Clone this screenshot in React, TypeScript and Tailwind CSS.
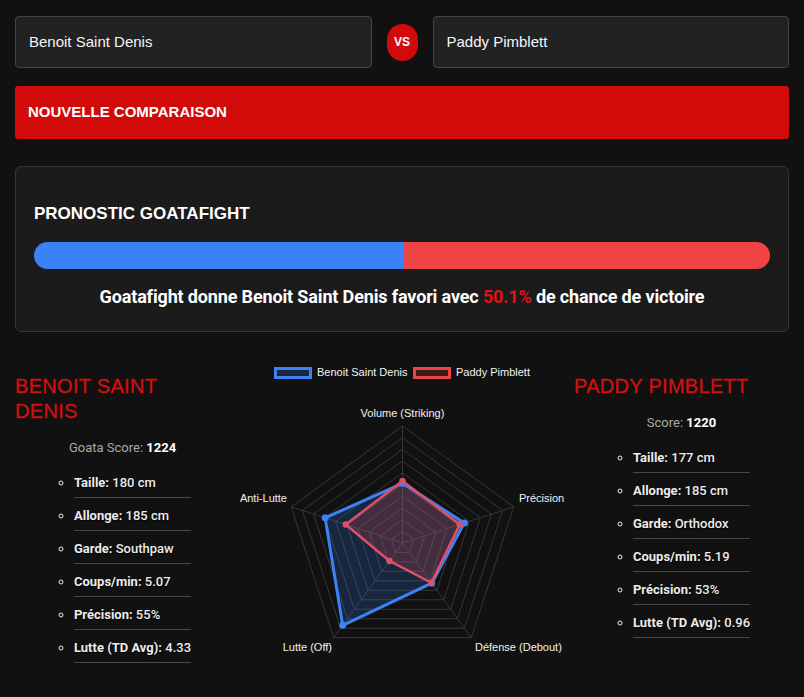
const fighters = [
  {
    name: 'Benoit Saint Denis',
    scoreLabel: 'Goata Score:',
    score: '1224',
    stats: [
      ['Taille:', '180 cm'],
      ['Allonge:', '185 cm'],
      ['Garde:', 'Southpaw'],
      ['Coups/min:', '5.07'],
      ['Précision:', '55%'],
      ['Lutte (TD Avg):', '4.33'],
    ],
  },
  {
    name: 'Paddy Pimblett',
    scoreLabel: 'Score:',
    score: '1220',
    stats: [
      ['Taille:', '177 cm'],
      ['Allonge:', '185 cm'],
      ['Garde:', 'Orthodox'],
      ['Coups/min:', '5.19'],
      ['Précision:', '53%'],
      ['Lutte (TD Avg):', '0.96'],
    ],
  },
];

const CX = 172.5;
const CY = 183;
const R = 117;

function pt(i: number, f: number) {
  const a = ((-90 + 72 * i) * Math.PI) / 180;
  return [CX + R * f * Math.cos(a), CY + R * f * Math.sin(a)];
}

function poly(vals: number[]) {
  return vals.map((v, i) => pt(i, v).join(',')).join(' ');
}

const blue = [0.51, 0.556, 0.425, 0.87, 0.695];
const red = [0.53, 0.515, 0.42, 0.19, 0.51];

function Radar() {
  const rings = [0.1, 0.2, 0.3, 0.4, 0.5, 0.6, 0.7, 0.8, 0.9, 1];
  return (
    <svg viewBox="0 0 344 300" className="w-[344px] h-[300px] mx-auto" style={{ fontFamily: '"Liberation Sans", Arial, sans-serif' }}>
      {/* legend */}
      <rect x="45.5" y="8.5" width="35" height="9" fill="rgba(59,130,246,0.2)" stroke="#3b82f6" strokeWidth="3" />
      <text x="87" y="16" fontSize="11" fill="#f2f2f2">Benoit Saint Denis</text>
      <rect x="184.5" y="8.5" width="35" height="9" fill="rgba(239,68,68,0.2)" stroke="#ef4444" strokeWidth="3" />
      <text x="226" y="16" fontSize="11" fill="#f2f2f2">Paddy Pimblett</text>

      {/* grid */}
      {rings.map((r) => (
        <polygon key={r} points={poly([r, r, r, r, r])} fill="none" stroke="#363636" strokeWidth="1" />
      ))}
      {[0, 1, 2, 3, 4].map((i) => {
        const [x, y] = pt(i, 1);
        return <line key={i} x1={CX} y1={CY} x2={x} y2={y} stroke="#363636" strokeWidth="1" />;
      })}

      {/* data */}
      <polygon points={poly(blue)} fill="rgba(59,130,246,0.2)" stroke="#3b82f6" strokeWidth="3" strokeLinejoin="round" />
      <polygon points={poly(red)} fill="rgba(239,68,68,0.2)" stroke="#dc5068" strokeWidth="2.5" strokeLinejoin="round" />
      {blue.map((v, i) => {
        const [x, y] = pt(i, v);
        return <circle key={'b' + i} cx={x} cy={y} r="3.5" fill="#3b82f6" />;
      })}
      {red.map((v, i) => {
        const [x, y] = pt(i, v);
        return <circle key={'r' + i} cx={x} cy={y} r="3.2" fill="#dc5068" />;
      })}

      {/* labels */}
      <text x={CX} y="57" fontSize="11" fill="#f2f2f2" textAnchor="middle">Volume (Striking)</text>
      <text x="289" y="142" fontSize="11" fill="#f2f2f2">Précision</text>
      <text x="57" y="142" fontSize="11" fill="#f2f2f2" textAnchor="end">Anti-Lutte</text>
      <text x="245" y="291" fontSize="11" fill="#f2f2f2">Défense (Debout)</text>
      <text x="102" y="291" fontSize="11" fill="#f2f2f2" textAnchor="end">Lutte (Off)</text>
    </svg>
  );
}

function FighterColumn({ f }: { f: (typeof fighters)[number] }) {
  return (
    <div className="pt-[14px] flex flex-col">
      <h2 className="pr-[10px] font-['Liberation_Sans',Arial,sans-serif] text-[20px] leading-[25px] tracking-[0.3px] text-[#d40f0f] uppercase [-webkit-text-stroke:0.3px_#d40f0f]">
        {f.name}
      </h2>
      <p className="mt-[14px] text-center text-[13px] leading-5 text-[#a8a8a8]">
        {f.scoreLabel} <span className="font-bold text-white">{f.score}</span>
      </p>
      <ul className="mt-[7px] mx-auto w-fit list-[circle] pl-5 text-[13px] text-[#ececec] [text-shadow:1px_1px_1px_rgba(0,0,0,0.9)]">
        {f.stats.map(([k, v]) => (
          <li key={k} className="pt-[10px] pb-[6px] leading-4 border-b border-[#474747]">
            <span className="font-bold">{k}</span> <span className="font-medium">{v}</span>
          </li>
        ))}
      </ul>
    </div>
  );
}

export default function App() {
  return (
    <div className="min-h-screen bg-[#111111] px-[15px] pt-4 pb-10 font-['Roboto',sans-serif] text-white">
      <div className="flex items-center gap-[15px]">
        <div className="flex-1 h-[52px] flex items-center px-[13px] bg-[#222222] border border-[#444] rounded-[4px] font-['Liberation_Sans',Arial,sans-serif] text-[15px] text-[#f5f5f5]">
          Benoit Saint Denis
        </div>
        <div className="w-[31px] h-[37px] rounded-full bg-[#d10a0a] flex items-center justify-center font-['Liberation_Sans',Arial,sans-serif] font-bold text-[12px]">
          VS
        </div>
        <div className="flex-1 h-[52px] flex items-center px-[13px] bg-[#222222] border border-[#444] rounded-[4px] font-['Liberation_Sans',Arial,sans-serif] text-[15px] text-[#f5f5f5]">
          Paddy Pimblett
        </div>
      </div>

      <button className="mt-[18px] w-full h-[53px] bg-[#d10a0a] rounded-[3px] text-left px-[13px] font-['Liberation_Sans',Arial,sans-serif] font-bold text-[15px] uppercase">
        Nouvelle comparaison
      </button>

      <div className="mt-[27px] bg-[#1b1b1b] border border-[#353535] rounded-[6px] px-[18px] pt-[35px] pb-[22px]">
        <h3 className="font-['Liberation_Sans',Arial,sans-serif] font-bold text-[17px] leading-6 uppercase">Pronostic Goatafight</h3>
        <div className="mt-4 h-[27px] rounded-full overflow-hidden flex">
          <div className="h-full bg-[#3b82f6]" style={{ width: '50.1%' }} />
          <div className="h-full flex-1 bg-[#ef4444]" />
        </div>
        <p className="mt-4 text-center text-[18px] leading-6 font-bold tracking-[-0.15px]">
          Goatafight donne Benoit Saint Denis favori avec <span className="text-[#dc1414]">50.1%</span> de chance de victoire
        </p>
      </div>

      <div className="mt-[28px] grid grid-cols-[1fr_1.6fr_1fr]">
        <FighterColumn f={fighters[0]} />
        <Radar />
        <FighterColumn f={fighters[1]} />
      </div>
    </div>
  );
}
